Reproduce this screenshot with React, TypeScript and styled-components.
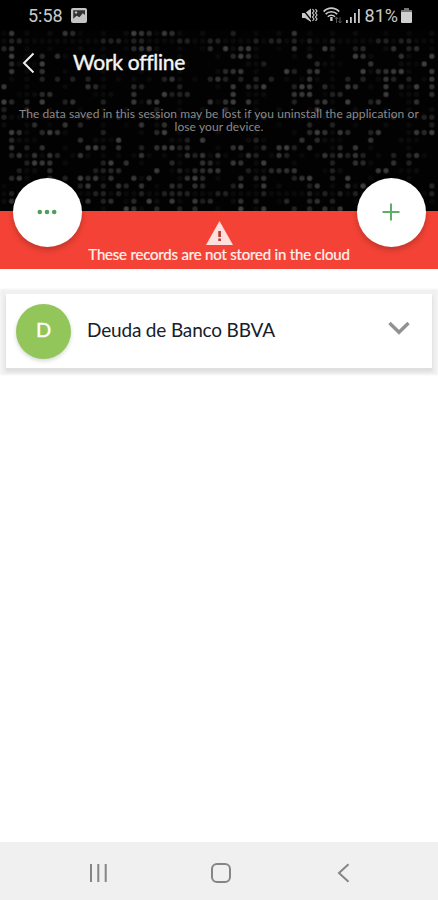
import React from "react";
import styled, { createGlobalStyle } from "styled-components";

const GlobalStyle = createGlobalStyle`
  * { box-sizing: border-box; }
  body { margin: 0; background: #fff; font-family: Lato, "Open Sans", sans-serif; }
`;

const Screen = styled.main`
  width: 438px;
  height: 900px;
  display: flex;
  flex-direction: column;
  background: #fff;
  overflow: hidden;
`;

const StatusBar = styled.div`
  height: 30px;
  flex: none;
  display: flex;
  align-items: center;
  justify-content: space-between;
  padding: 1px 26px 0 28px;
  background: #000;
  color: #c9c9c9;
  font: 18px/30px Roboto, sans-serif;
`;

const StatusGroup = styled.div<{ $gap: number }>`
  display: flex;
  align-items: center;
  gap: ${(p) => p.$gap}px;
`;

const StatusText = styled.span`
  white-space: nowrap;
`;

const Header = styled.header`
  position: relative;
  height: 181px;
  flex: none;
  background: #020202;
`;

const Pattern = styled.svg`
  position: absolute;
  inset: 0;
`;

const HeaderContent = styled.div`
  position: relative;
  display: flex;
  flex-direction: column;
`;

const TitleRow = styled.div`
  display: flex;
  align-items: center;
  height: 64px;
  padding-left: 21px;
  gap: 37px;
`;

const Title = styled.h1`
  margin: 0;
  color: #f5f5f5;
  font-size: 21px;
  font-weight: 400;
  line-height: 28px;
  letter-spacing: -0.28px;
  -webkit-text-stroke: 0.4px #f5f5f5;
`;

const Notice = styled.p`
  margin: 13px 0 0;
  color: #8b8b8b;
  font-size: 12px;
  line-height: 13px;
  letter-spacing: 0.09px;
  text-align: center;
  white-space: nowrap;
`;

const Banner = styled.section`
  position: relative;
  height: 58px;
  flex: none;
  display: flex;
  flex-direction: column;
  align-items: center;
  padding-top: 10px;
  background: #f44336;
`;

const BannerText = styled.p`
  margin: 0;
  color: #fff3f0;
  font-size: 15px;
  line-height: 18px;
  letter-spacing: -0.19px;
  -webkit-text-stroke: 0.2px #fff3f0;
  white-space: nowrap;
`;

const RoundButton = styled.button<{ $side: "left" | "right" }>`
  position: absolute;
  top: -33px;
  ${(p) => (p.$side === "left" ? "left: 13px;" : "right: 12px;")}
  width: 69px;
  height: 69px;
  padding: 0 1px 2px 0;
  border: 0;
  border-radius: 50%;
  background: #fff;
  display: grid;
  place-items: center;
  box-shadow: 0 3px 6px rgba(0, 0, 0, 0.22);
`;

const Records = styled.section`
  flex: 1;
  padding: 25px 6px 0;
`;

const RecordCard = styled.article`
  height: 74px;
  display: flex;
  align-items: center;
  padding: 0 22px 0 10px;
  background: #fff;
  box-shadow: 0 1px 2px 6px rgba(0, 0, 0, 0.06), 0 3px 3px 1px rgba(0, 0, 0, 0.07);
`;

const Avatar = styled.div`
  width: 55px;
  height: 55px;
  flex: none;
  display: grid;
  place-items: center;
  border-radius: 50%;
  background: #93c65a;
  color: #fff;
  font: 400 20px/1 Lato, sans-serif;
  padding-bottom: 4px;
  -webkit-text-stroke: 0.4px #fff;
  box-shadow: 0 2px 4px rgba(0, 0, 0, 0.16);
`;

const RecordName = styled.span`
  flex: 1;
  margin: -3px 0 0 16px;
  color: #15202b;
  font-size: 19px;
  line-height: 26px;
  letter-spacing: -0.17px;
  white-space: nowrap;
`;

const NavBar = styled.nav`
  height: 58px;
  flex: none;
  display: flex;
  align-items: center;
  justify-content: space-between;
  padding: 3px 87px 0 88px;
  background: #f0f0f0;
`;

const HomeIcon = styled.svg`
  margin-right: 3px;
`;

// Columns that are lit in each row of the header's dot matrix.
const LIT: number[][] = [
  [1, 8, 9, 17, 18, 19, 21, 22, 30, 38],
  [1, 2, 13, 14, 15, 17, 18, 23, 24, 27, 28, 33, 35, 36, 38, 40, 43, 49, 50, 52, 53],
  [0, 1, 17, 18, 19, 27, 29, 31, 32, 38, 42, 43, 46, 47, 51, 53, 54],
  [1, 5, 7, 30, 31, 32, 40, 46, 47, 52, 56],
  [1, 5, 34, 41, 48, 55],
  [1, 5, 29, 30, 31, 37, 38, 40, 41, 47, 49, 50, 51, 52, 56],
  [5, 7, 9, 11, 21, 22, 27, 28, 29, 31, 33, 35, 40, 45, 47, 50, 51, 53, 56],
  [0, 11, 12, 17, 18, 23, 30, 32, 33, 34, 38, 39, 40, 42, 45, 46, 50, 52, 54, 56],
  [5, 6, 17, 21, 22, 23, 24, 30, 38, 39, 40, 43, 44, 50, 56],
  [0, 1, 3, 5, 8, 9, 13, 17, 19, 20, 27, 29, 30, 32, 38, 41, 42, 45, 48, 49, 54],
  [0, 3, 20, 29, 41],
  [0, 11, 15, 20, 34, 51, 55, 56],
  [4, 8, 10, 18, 21, 40, 43, 56],
  [1, 2, 5, 6, 7, 13, 20, 21, 40, 41, 42, 44, 45, 48, 49, 54, 55, 56],
  [1, 10, 15, 24, 26, 33, 39, 41, 48],
  [1, 3, 5, 11, 12, 13, 15, 18, 20, 21, 22, 23, 24, 30, 31, 34, 36, 37, 38, 40, 44, 46],
  [1, 2, 4, 6, 7, 10, 18, 24, 25, 26, 28, 32, 33, 36, 37, 42, 43, 44, 45, 46, 47, 51, 53, 54],
  [3, 4, 5, 6, 13, 14, 16, 22, 26, 27, 30, 31, 34, 43, 46, 47, 51, 53],
  [2, 6, 12, 13, 14, 15, 20, 23, 25, 26, 27, 28, 32, 35, 36, 37, 38, 43, 49, 50],
  [1, 2, 6, 8, 10, 11, 12, 14, 17, 19, 24, 25, 26, 31, 33, 34, 38, 39, 40, 43, 45],
  [10, 11, 13, 15, 16, 18, 22, 23, 25, 26, 30, 31, 34, 40, 41, 45, 47, 56],
  [1, 12, 13, 15, 18, 21, 22, 23, 24, 28, 29, 34, 40, 42, 44, 46, 56],
  [1, 11, 13, 14, 17, 19, 22, 25, 26, 27, 31, 33, 37, 40, 41, 43],
  [16, 17, 20, 23, 25, 31, 34, 38, 40, 42, 44],
];

const hash = (c: number, r: number) => (c * 37 + r * 61 + c * r * 13) % 10;

const DotMatrix = () => (
  <Pattern width="438" height="181" viewBox="0 0 438 181" aria-hidden="true">
    {LIT.flatMap((_, r) =>
      Array.from({ length: 57 }, (__, c) => {
        const lit = LIT[r].includes(c);
        const h = hash(c, r);
        if (!lit && h > 2) return null;
        const opacity = lit ? 0.14 + h * 0.018 : 0.03 + h * 0.01;
        const x = 4 + c * 7.64;
        const y = 3.4 + r * 7.63;
        return (
          <g key={`${r}-${c}`} opacity={opacity}>
            <circle cx={x} cy={y} r="3" fill="#fff" opacity="0.45" />
            <circle cx={x} cy={y} r="2.1" fill="#fff" opacity="0.6" />
          </g>
        );
      })
    )}
  </Pattern>
);

export default function App() {
  return (
    <>
      <GlobalStyle />
      <Screen>
        <StatusBar>
          <StatusGroup $gap={8}>
            <StatusText>5:58</StatusText>
            <svg width="16" height="15" viewBox="0 0 16 15">
              <rect width="16" height="15" rx="2" fill="#c4c4c4" />
              <path d="M2.2 2.2H14V7L11.8 5.3 8.5 9.2 5.6 7.8 2.2 10.7Z" fill="#333" />
              <path d="M5 3l1.5 1.5L5 6 3.5 4.5Z" fill="#c4c4c4" />
            </svg>
          </StatusGroup>
          <StatusGroup $gap={4.5}>
            <svg width="17" height="17" viewBox="0 0 17 17" fill="none" stroke="#c9c9c9">
              <path d="M1 6h3l6-4.5V15L4 11H1Z" fill="#c9c9c9" stroke="none" />
              <path d="M1 1.5l10.5 13" stroke="#000" strokeWidth="1.2" />
              <path d="M11.5 2l1.5 2-1.5 2L13 8l-1.5 2 1.5 2-1.5 2M14.5 2L16 4l-1.5 2L16 8l-1.5 2 1.5 2-1.5 2" strokeWidth="1.2" />
            </svg>
            <svg width="19" height="17" viewBox="0 0 19 17" fill="none" stroke="#c9c9c9" strokeWidth="1.6">
              <path d="M.6 4.6C5-.1 11.8-.1 16.2 4.6M2.6 7.1c3.2-3.1 8.4-3.1 11.6 0M4.8 9.7c2-2 5.2-2 7.2 0" />
              <path d="M8.4 10v4" strokeWidth="2.4" />
              <path d="M13.5 10v6M12 12l1.5-2 1.5 2M17 10v6M15.5 14l1.5 2 1.5-2" stroke="#555" strokeWidth="1" />
            </svg>
            <svg width="14" height="15" viewBox="0 0 14 15" fill="#c9c9c9">
              <path d="M0 12h1.8v3H0zM4 9h1.8v6H4zM8 5h1.8v10H8zM12 1h1.8v14H12z" />
            </svg>
            <StatusGroup $gap={3}>
              <StatusText>81%</StatusText>
              <svg width="11" height="15" viewBox="0 0 11 15">
                <path d="M3 0h5v2h2q1 0 1 1v11q0 1-1 1H1q-1 0-1-1V3q0-1 1-1h2Z" fill="#d0d0d0" />
                <path d="M3 0h5v2h3v2H0V2h3Z" fill="#777" />
              </svg>
            </StatusGroup>
          </StatusGroup>
        </StatusBar>

        <Header>
          <DotMatrix />
          <HeaderContent>
            <TitleRow>
              <svg width="15" height="22" viewBox="0 0 15 22" fill="none" stroke="#eee" strokeWidth="2">
                <path d="M12.5 2.5L3 12l9.5 9.5" />
              </svg>
              <Title>Work offline</Title>
            </TitleRow>
            <Notice>
              The data saved in this session may be lost if you uninstall the application or
              <br />
              lose your device.
            </Notice>
          </HeaderContent>
        </Header>

        <Banner>
          <svg width="27" height="24" viewBox="0 0 27 24">
            <path d="M13.5 0L27 24H0Z" fill="#ffe0dd" />
            <path d="M12.3 10h2.6v6h-2.6zM12.3 17.5h2.6v2.6h-2.6z" fill="#b8342b" />
          </svg>
          <BannerText>These records are not stored in the cloud</BannerText>
          <RoundButton $side="left" aria-label="More">
            <svg width="20" height="6" viewBox="0 0 20 6" fill="#4f9f58">
              <circle cx="2.8" cy="3" r="2.3" />
              <circle cx="10" cy="3" r="2.3" />
              <circle cx="17.2" cy="3" r="2.3" />
            </svg>
          </RoundButton>
          <RoundButton $side="right" aria-label="Add">
            <svg width="18" height="18" viewBox="0 0 18 18" stroke="#5fae68" strokeWidth="2">
              <path d="M9 .5v17M.5 9h17" />
            </svg>
          </RoundButton>
        </Banner>

        <Records>
          <RecordCard>
            <Avatar>D</Avatar>
            <RecordName>Deuda de Banco BBVA</RecordName>
            <svg width="22" height="22" viewBox="0 0 22 22" fill="none" stroke="#929292" strokeWidth="3.4">
              <path d="M1.5 3l9.5 9.3L20.5 3" />
            </svg>
          </RecordCard>
        </Records>

        <NavBar>
          <svg width="20" height="20" viewBox="0 0 20 20" stroke="#858585" strokeWidth="2">
            <path d="M3 1v18M10.3 1v18M17.7 1v18" />
          </svg>
          <HomeIcon width="22" height="22" viewBox="0 0 22 22" fill="none" stroke="#858585" strokeWidth="2">
            <rect x="2" y="2" width="18" height="18" rx="5" />
          </HomeIcon>
          <svg width="14" height="20" viewBox="0 0 14 20" fill="none" stroke="#858585" strokeWidth="2">
            <path d="M11.5 1.2L2 10l9.5 8.8" />
          </svg>
        </NavBar>
      </Screen>
    </>
  );
}
